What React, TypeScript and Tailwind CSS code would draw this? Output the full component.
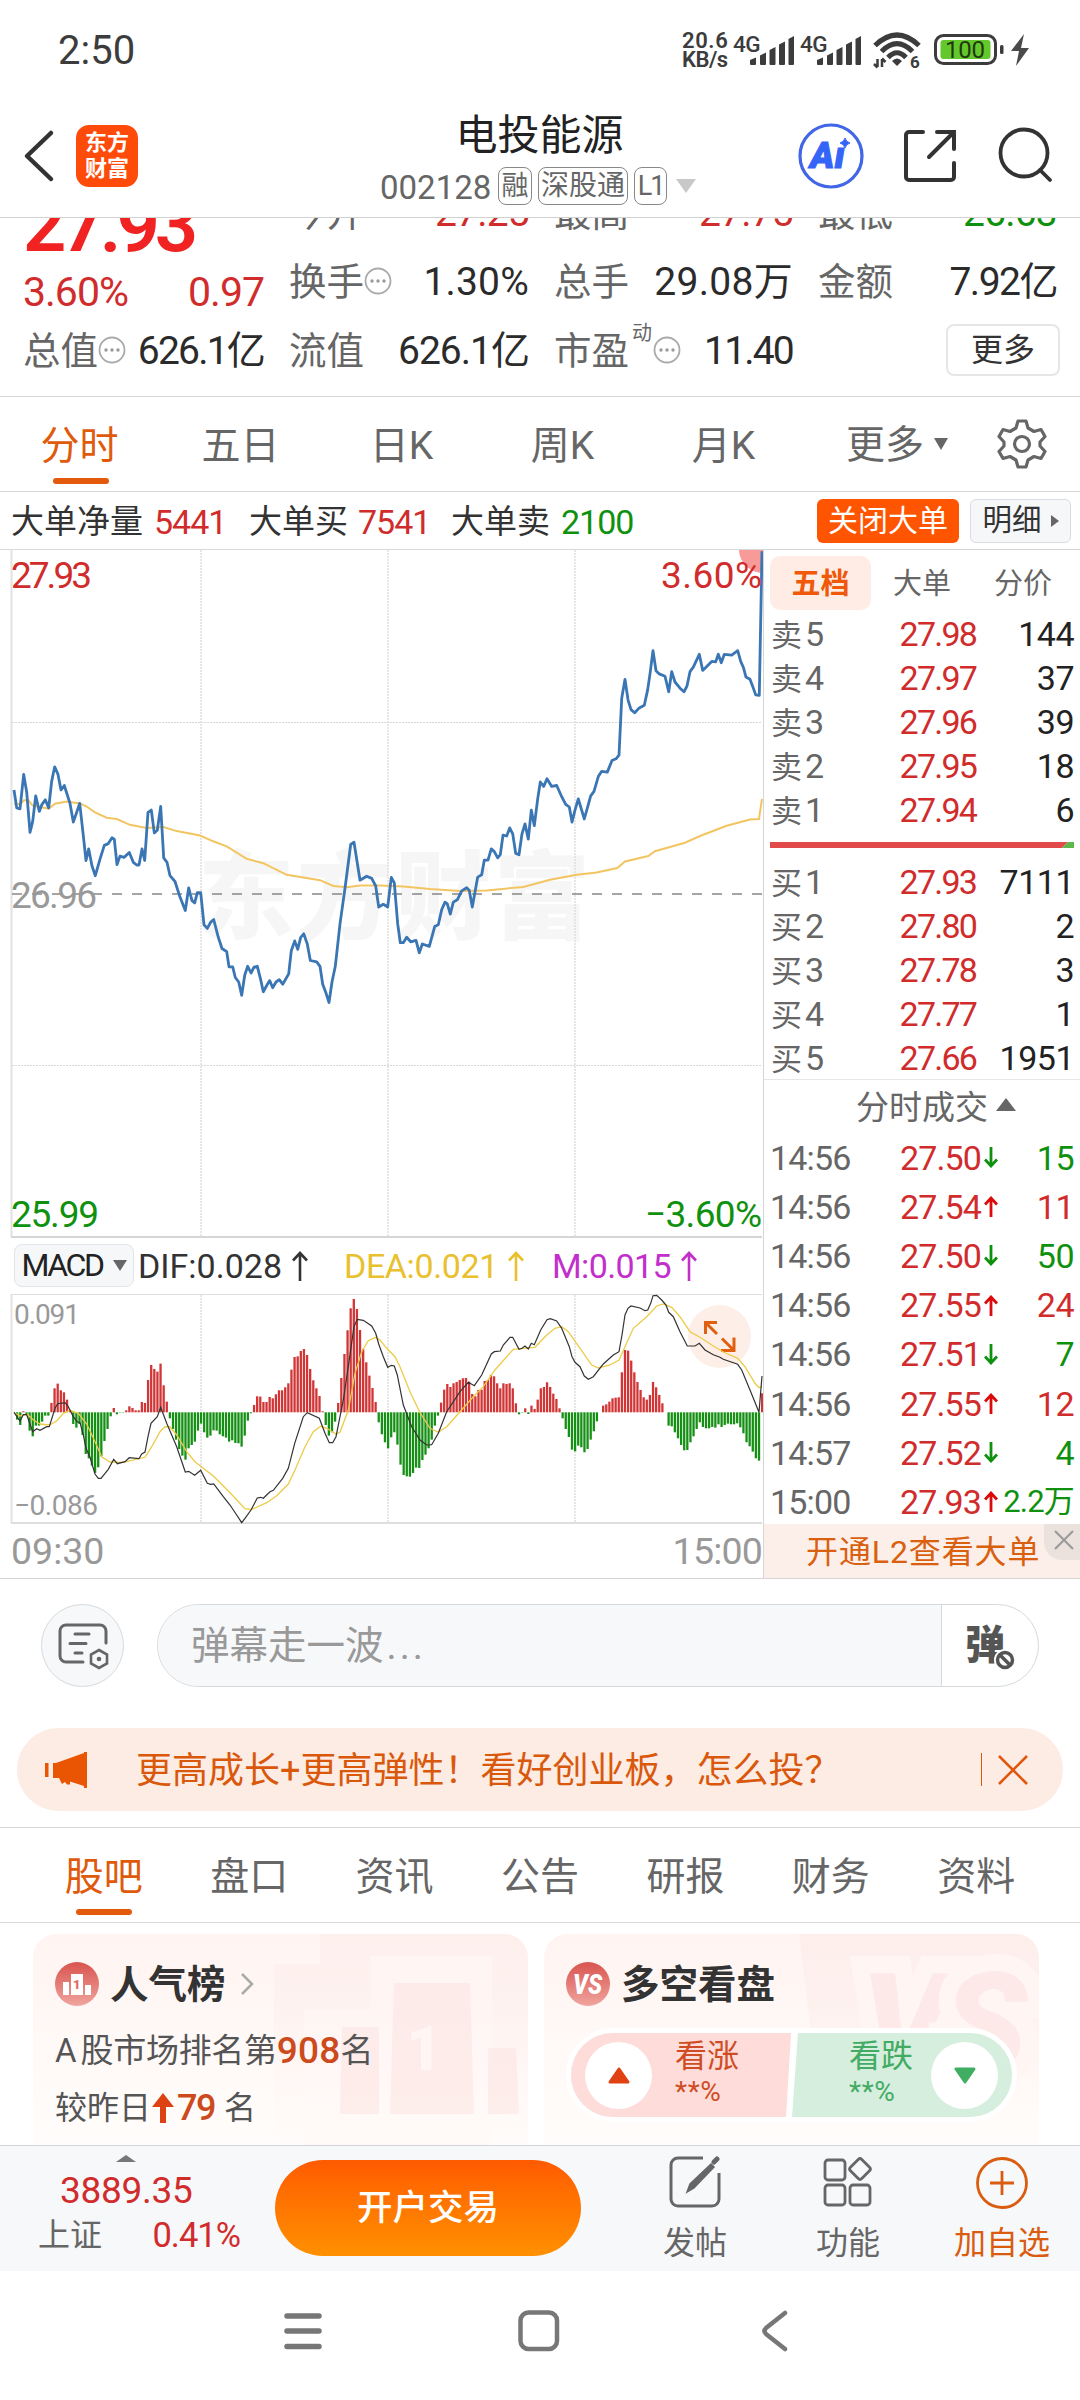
import React from "react";
import clsx from "clsx";

const RED = "text-[#d12c2c]";
const GREEN = "text-[#0f910f]";

// price line: [x / 3, y / 2.24] from the left edge of each session
const morningPrice = [
  42, 560, 50, 600, 60, 602, 71, 525, 80, 565, 90, 655, 98, 630, 107, 573, 118, 608, 126, 592, 136, 582, 146, 600,
  155, 540, 164, 508, 174, 525, 183, 560, 193, 550, 210, 590, 220, 632, 230, 610, 239, 590, 248, 650, 258, 718,
  266, 692, 276, 730, 286, 752, 300, 715, 313, 684, 325, 680, 336, 667, 343, 670, 351, 727, 360, 708, 372, 711,
  388, 700, 400, 722, 410, 728, 417, 728, 426, 692, 434, 718, 444, 610, 454, 605, 463, 656, 472, 650, 482, 597,
  491, 712, 501, 722, 510, 752, 525, 765, 540, 800, 556, 830, 566, 779, 576, 808, 584, 813, 592, 790, 602, 790,
  612, 862, 622, 870, 632, 856, 641, 850, 655, 890, 666, 915, 680, 922, 687, 956, 698, 956, 706, 980, 716, 990,
  725, 1020, 734, 975, 743, 955, 753, 970, 762, 957, 772, 955, 782, 985, 790, 1012, 800, 998, 809, 987, 818, 1003,
  828, 990, 838, 985, 848, 995, 866, 972, 874, 920, 884, 898, 893, 917, 902, 890, 911, 882, 922, 905, 931, 942,
  950, 945, 960, 955, 968, 995, 978, 1015, 987, 1036, 996, 990, 1006, 955, 1020, 860, 1035, 780, 1052, 682,
  1062, 677, 1080, 762, 1100, 753, 1115, 758, 1127, 775, 1136, 822,
];
const afternoonPrice = [
  10, 816, 23, 822, 34, 756, 43, 768, 53, 860, 61, 902, 70, 902, 80, 890, 92, 900, 108, 897, 118, 925, 127, 905,
  148, 910, 164, 866, 175, 862, 185, 828, 195, 811, 202, 815, 211, 838, 220, 811, 232, 806, 245, 786, 260, 779,
  268, 785, 277, 822, 293, 755, 305, 750, 313, 717, 324, 717, 334, 692, 343, 698, 353, 712, 361, 705, 369, 661,
  380, 663, 389, 645, 398, 658, 407, 702, 417, 705, 426, 658, 435, 636, 445, 670, 454, 605, 463, 640, 473, 580,
  481, 542, 491, 552, 501, 535, 515, 552, 530, 550, 545, 575, 557, 592, 568, 598, 576, 632, 585, 605, 595, 580,
  613, 625, 632, 573, 642, 563, 655, 530, 665, 518, 682, 520, 696, 494, 708, 490, 717, 482, 725, 355, 735, 312,
  744, 358, 753, 380, 764, 387, 778, 376, 793, 370, 803, 335, 810, 300, 819, 248, 828, 293, 838, 300, 855, 305,
  866, 340, 875, 295, 885, 318, 900, 332, 912, 340, 921, 327, 930, 295, 940, 285, 958, 256, 968, 292, 978, 285,
  995, 272, 1007, 273, 1015, 256, 1024, 275, 1033, 256, 1055, 258, 1073, 248, 1082, 272, 1090, 285, 1098, 307,
  1110, 312, 1118, 328, 1127, 347, 1138, 348, 1146, 25,
];
const morningAvg = [
  42, 590, 60, 592, 72, 583, 85, 583, 98, 595, 146, 602, 165, 591, 200, 586, 240, 590, 260, 597, 285, 610, 320, 622,
  350, 625, 390, 638, 440, 645, 490, 643, 530, 652, 600, 662, 640, 675, 680, 686, 740, 714, 790, 724, 860, 750,
  960, 762, 1000, 775, 1040, 778, 1080, 774,
];
const afternoonAvg = [
  0, 774, 70, 776, 150, 782, 240, 786, 320, 785, 430, 777, 510, 761, 590, 750, 650, 745, 712, 735, 735, 720,
  805, 708, 825, 697, 915, 678, 960, 663, 1040, 640, 1110, 626, 1137, 625, 1146, 580,
];

const morningDif = [
  42, 577, 60, 603, 70, 584, 80, 584, 98, 635, 110, 626, 120, 631, 140, 620, 148, 620, 165, 565, 173, 551, 195, 548,
  205, 560, 220, 590, 232, 605, 240, 608, 250, 645, 258, 685, 270, 712, 285, 762, 295, 775, 303, 775, 325, 748,
  341, 718, 352, 731, 375, 725, 388, 713, 417, 716, 425, 702, 435, 696, 444, 650, 453, 610, 472, 590, 482, 562,
  500, 610, 530, 680, 556, 756, 566, 754, 584, 766, 602, 751, 622, 790, 632, 793, 641, 792, 670, 830, 690, 855,
  710, 885, 725, 908, 735, 895, 753, 870, 772, 834, 782, 832, 790, 835, 810, 815, 820, 811, 848, 775, 865, 745,
  884, 670, 910, 590, 922, 578, 958, 595, 975, 640, 988, 668, 998, 668, 1008, 650, 1030, 540, 1045, 440, 1062, 320,
  1072, 298, 1090, 301, 1115, 318, 1127, 340, 1136, 372,
];
const afternoonDif = [
  10, 410, 23, 442, 34, 436, 43, 438, 52, 465, 70, 555, 95, 620, 120, 660, 140, 675, 155, 674, 175, 640, 200, 575,
  240, 515, 265, 487, 283, 497, 305, 465, 334, 402, 343, 395, 361, 393, 370, 375, 390, 352, 398, 352, 417, 388,
  426, 385, 435, 378, 445, 387, 454, 370, 463, 374, 482, 330, 501, 299, 511, 296, 530, 303, 545, 325, 568, 380,
  576, 410, 585, 427, 600, 440, 613, 468, 625, 478, 640, 470, 670, 432, 700, 405, 717, 395, 726, 345, 735, 285,
  744, 265, 753, 258, 780, 264, 795, 272, 803, 270, 812, 250, 819, 227, 830, 226, 845, 240, 858, 255, 866, 277,
  880, 290, 900, 335, 922, 378, 945, 378, 958, 370, 975, 390, 1000, 404, 1020, 412, 1030, 418, 1073, 433,
  1085, 450, 1110, 510, 1137, 577, 1146, 468,
];
const morningDea = [
  42, 577, 60, 588, 82, 583, 100, 600, 120, 612, 148, 615, 170, 603, 190, 580, 210, 571, 235, 580, 260, 612,
  285, 665, 305, 710, 330, 726, 370, 727, 435, 712, 455, 680, 480, 635, 495, 620, 510, 621, 530, 645, 560, 695,
  585, 725, 640, 768, 690, 818, 735, 866, 753, 869, 800, 848, 830, 827, 865, 792, 885, 750, 915, 680, 940, 635,
  962, 619, 980, 625, 1008, 642, 1020, 637, 1045, 570, 1065, 460, 1085, 395, 1105, 362, 1127, 352,
];
const afternoonDea = [
  0, 360, 20, 385, 45, 410, 60, 440, 90, 515, 120, 578, 150, 625, 175, 637, 200, 620, 240, 575, 280, 530, 310, 500,
  345, 450, 400, 388, 430, 385, 465, 382, 500, 345, 525, 325, 545, 320, 565, 335, 600, 385, 635, 435, 655, 444,
  690, 435, 717, 420, 735, 380, 760, 325, 800, 290, 830, 258, 850, 252, 875, 262, 900, 290, 930, 335, 960, 352,
  1000, 378, 1030, 396, 1073, 415, 1095, 440, 1125, 490, 1137, 503, 1146, 500,
];

// one histogram value per minute
const macdBars = [
  0, -22, -38, 3, -8, -55, -72, -40, -40, -28, -10, -10, 28, 72, 86, 66, 60, 38, 5, -35, -46, -35, -68, -125, -138,
  -160, -182, -165, -132, -86, -50, -12, 13, -6, -1, -1, 6, 18, 13, 6, 6, 31, 28, 97, 142, 130, 122, 146, 81, 32,
  -18, -50, -82, -110, -130, -142, -108, -98, -88, -55, -34, -60, -76, -70, -54, -55, -66, -72, -76, -88, -84, -92,
  -93, -103, -70, -25, -3, 22, 48, 47, 31, 31, 46, 42, 54, 66, 66, 75, 87, 128, 166, 168, 184, 190, 172, 130, 96, 72,
  49, 3, -38, -70, -60, -28, 28, 103, 175, 246, 312, 340, 310, 247, 190, 150, 110, 73, 31, -30, -66, -90, -108, -75,
  -60, -97, -157, -188, -192, -193, -182, -166, -167, -143, -127, -108, -82, -40, -10, 29, 68, 85, 76, 87, 91, 97,
  102, 103, 92, 55, 48, 67, 68, 94, 97, 112, 108, 87, 72, 87, 85, 87, 72, 27, -6, -1, 12, -5, 20, 10, 38, 72, 76, 90,
  76, 56, 40, 12, -18, -50, -74, -112, -117, -100, -105, -120, -110, -82, -57, -27, 0, 20, 24, 32, 42, 44, 45, 120,
  187, 185, 155, 120, 91, 67, 45, 38, 52, 91, 75, 52, 27, 0, -40, -42, -60, -78, -98, -114, -113, -90, -72, -50, -30,
  -44, -48, -48, -44, -46, -36, -44, -38, -34, -36, -36, -33, -45, -63, -90, -102, -118, -138, -145, 57,
];

const toPoints = (morning: number[], afternoon: number[], yScale: number, y0: number) => {
  const out: string[] = [];
  for (let i = 0; i < morning.length; i += 2) {
    out.push(`${(morning[i] / 3).toFixed(1)},${(morning[i + 1] / yScale + y0).toFixed(1)}`);
  }
  for (let i = 0; i < afternoon.length; i += 2) {
    out.push(`${(afternoon[i] / 3 + 380).toFixed(1)},${(afternoon[i + 1] / yScale + y0).toFixed(1)}`);
  }
  return out.join(" ");
};

const sells = [
  ["卖5", "27.98", "144"],
  ["卖4", "27.97", "37"],
  ["卖3", "27.96", "39"],
  ["卖2", "27.95", "18"],
  ["卖1", "27.94", "6"],
];
const buys = [
  ["买1", "27.93", "7111"],
  ["买2", "27.80", "2"],
  ["买3", "27.78", "3"],
  ["买4", "27.77", "1"],
  ["买5", "27.66", "1951"],
];
const ticks = [
  { time: "14:56", price: "27.50", up: false, vol: "15" },
  { time: "14:56", price: "27.54", up: true, vol: "11" },
  { time: "14:56", price: "27.50", up: false, vol: "50" },
  { time: "14:56", price: "27.55", up: true, vol: "24" },
  { time: "14:56", price: "27.51", up: false, vol: "7" },
  { time: "14:56", price: "27.55", up: true, vol: "12" },
  { time: "14:57", price: "27.52", up: false, vol: "4" },
  { time: "15:00", price: "27.93", up: true, vol: "2.2万", volGreen: true },
];

function Signal() {
  return (
    <div className="flex h-9 w-[61px]">
      <span className="w-[17px] text-[22.500px] leading-[24px] font-medium tracking-[-0.5px]">4G</span>
      <svg width="44" height="36" viewBox="0 0 44 36" className="shrink-0" fill="#3c3c3c">
        <path d="M0 32V28L6 25.500V32a1 1 0 0 1-1 1H1a1 1 0 0 1-1-1z" />
        <path d="M10 23.500L16 20.500V32a1 1 0 0 1-1 1h-4a1 1 0 0 1-1-1z" />
        <path d="M19.500 18L25.500 15V32a1 1 0 0 1-1 1h-4a1 1 0 0 1-1-1z" />
        <path d="M29 12.500L35 9.500V32a1 1 0 0 1-1 1h-4a1 1 0 0 1-1-1z" />
        <path d="M38.500 7L44 4V32a1 1 0 0 1-1 1h-3.500a1 1 0 0 1-1-1z" />
      </svg>
    </div>
  );
}

function StatusBar() {
  return (
    <div className="flex h-[100px] items-center pl-[58px] text-[#3c3c3c]">
      <span className="mt-[2px] w-[624px] text-[40px] leading-none">2:50</span>
      <div className="w-[51px] text-[22px] leading-[19px] font-semibold">
        <div className="tracking-[0.6px]">20.6</div>
        <div className="tracking-[-0.5px]">KB/s</div>
      </div>
      <Signal />
      <div className="ml-[6px]">
        <Signal />
      </div>
      <svg width="48" height="38" viewBox="0 0 48 38" className="ml-[12px]" fill="none" stroke="#3c3c3c">
        <path d="M2 14.500Q24-6.500 46 14.500" strokeWidth="5" />
        <path d="M8.500 20.500Q24 5 39.500 20.500" strokeWidth="5" />
        <path d="M15 26.500Q24 17 33 26.500" strokeWidth="5" />
        <path d="M19 30Q24 25 29 30L24 35z" fill="#3c3c3c" stroke="none" />
        <path d="M4.500 28v8M4.500 36.500L1 33M9 36v-8M9 27.500l3.500 3.500" strokeWidth="2.500" />
        <text x="37" y="36.500" fontSize="17" fontWeight="700" fill="#3c3c3c" stroke="none">
          6
        </text>
      </svg>
      <svg width="96" height="32" viewBox="0 0 96 32" className="ml-[13px]">
        <rect x="1.500" y="1.500" width="60" height="28" rx="8" fill="#fff" stroke="#3c3c3c" strokeWidth="3" />
        <rect x="6.500" y="6" width="50" height="19" rx="3" fill="#63c82c" />
        <text x="11" y="24" fontSize="24" fill="#22390f" textLength="40">
          100
        </text>
        <rect x="66" y="11" width="3.500" height="9" rx="1.500" fill="#3c3c3c" />
        <path d="M90 0L77 17h8l-3 15 13-18h-8z" fill="#4a4a4a" />
      </svg>
    </div>
  );
}

function Header() {
  return (
    <div className="flex h-[118px] border-b border-[#d2d2d2] pl-[23px]">
      <svg width="32" height="56" viewBox="0 0 32 56" className="mt-7" fill="none" stroke="#333" strokeWidth="4.500">
        <path d="M28 5L4 28l24 23" strokeLinecap="round" strokeLinejoin="round" />
      </svg>
      <div className="mt-[25px] ml-[21px] flex h-[62px] w-[62px] flex-col items-center justify-center rounded-[13px] bg-[#ff4b0a] text-[22px] leading-[26px] font-bold text-white">
        <div>东方</div>
        <div>财富</div>
      </div>
      <div className="ml-[203px] flex w-[400px] flex-col items-center text-[#222]">
        <div className="mt-[11px] mr-[3px] text-[42px] leading-[50px]">电投能源</div>
        <div className="mt-[6px] flex h-[38px] w-full items-center pl-[39px] text-[#666]">
          <span className="mt-[2px] w-[118px] text-[33px] leading-none">002128</span>
          <span className="flex h-[38px] w-[34px] items-center justify-center rounded-lg border border-[#888] text-[27px]">
            融
          </span>
          <span className="ml-[6px] flex h-[38px] w-[90px] items-center justify-center rounded-lg border border-[#888] text-[28px]">
            深股通
          </span>
          <span className="ml-[6px] flex h-[38px] w-[33px] items-center justify-center rounded-lg border border-[#888] text-[27px] tracking-[-2px]">
            L1
          </span>
          <svg width="20" height="14" viewBox="0 0 20 14" className="ml-[9px]">
            <path d="M0 0h20L10 14z" fill="#c8c8c8" />
          </svg>
        </div>
      </div>
      <svg width="66" height="66" viewBox="0 0 66 66" className="mt-[23px] ml-[57px]">
        <circle cx="33" cy="33" r="31" fill="none" stroke="#4166e6" strokeWidth="3.200" />
        <text x="12" y="45" fontSize="37" fontWeight="900" fontStyle="italic" fill="#3565f8" stroke="#3565f8">
          Aı
        </text>
        <path d="M47 15q1 4 5 5-4 1-5 5-1-4-5-5 4-1 5-5z" fill="#3565f8" stroke="#3565f8" />
      </svg>
      <svg
        width="54"
        height="54"
        viewBox="0 0 54 54"
        className="mt-[29px] ml-[39px]"
        fill="none"
        stroke="#333"
        strokeWidth="4"
        strokeLinecap="round"
      >
        <path d="M20 3H6a3 3 0 0 0-3 3v42a3 3 0 0 0 3 3h42a3 3 0 0 0 3-3V34" />
        <path d="M34 3h17v17M51 3L26 28" />
      </svg>
      <svg
        width="56"
        height="56"
        viewBox="0 0 56 56"
        className="mt-[27px] ml-[40px]"
        fill="none"
        stroke="#333"
        strokeWidth="3.800"
        strokeLinecap="round"
      >
        <circle cx="27" cy="26" r="23.500" />
        <path d="M43 43l10 10" />
      </svg>
    </div>
  );
}

function Dots() {
  return (
    <svg width="28" height="28" viewBox="0 0 28 28" className="mb-[3px] shrink-0">
      <circle cx="14" cy="14" r="12.500" fill="none" stroke="#aaa" strokeWidth="1.800" />
      <circle cx="8" cy="14" r="1.700" fill="#999" />
      <circle cx="14" cy="14" r="1.700" fill="#999" />
      <circle cx="20" cy="14" r="1.700" fill="#999" />
    </svg>
  );
}

function Cell({ label, value, dots, sup, color = "text-[#2b2b2b]", tracking = "tracking-[-0.8px]" }: any) {
  return (
    <div className="flex h-[69px] items-center leading-none">
      <span className="text-[37.500px] text-[#666]">{label}</span>
      {sup && <span className="mb-[37px] ml-[3px] w-[21px] text-[20px] text-[#666]">{sup}</span>}
      {dots && <Dots />}
      <span className={clsx("ml-auto text-[39px] whitespace-nowrap", color, tracking)}>{value}</span>
    </div>
  );
}

function Quote() {
  return (
    <div className="h-[179px] overflow-hidden border-b border-[#d8d8d8]">
      <div className="-mt-[39px] flex gap-[25px] pl-[23px]">
        <div className="w-[241px]">
          <div className="h-[89px] pt-[11px] text-[76px] leading-[70px] font-semibold tracking-[-5px] text-[#f02222]">
            27.93
          </div>
          <div className={clsx("flex h-[49px] items-center justify-between text-[41px] tracking-[-1px]", RED)}>
            <span>3.60%</span>
            <span>0.97</span>
          </div>
          <Cell label="总值" value="626.1亿" dots tracking="tracking-[-1.8px]" />
        </div>
        <div className="w-[240px]">
          <Cell label="今开" value="27.25" color={RED} />
          <Cell label="换手" value="1.30%" dots tracking="tracking-[0.2px]" />
          <Cell label="流值" value="626.1亿" tracking="tracking-[-1px]" />
        </div>
        <div className="w-[239px]">
          <Cell label="最高" value="27.75" color={RED} />
          <Cell label="总手" value="29.08万" tracking="tracking-[0.3px]" />
          <Cell label="市盈" value="11.40" dots sup="动" tracking="tracking-[-1.8px]" />
        </div>
        <div className="w-[239px]">
          <Cell label="最低" value="26.63" color={GREEN} />
          <Cell label="金额" value="7.92亿" tracking="tracking-[-1.5px]" />
          <div className="flex h-[69px] items-center justify-end">
            <button className="mr-[-3px] mb-[3px] h-[52px] w-[114px] rounded-lg border-2 border-[#e6e6e6] text-[32px] leading-none text-[#333]">
              更多
            </button>
          </div>
        </div>
      </div>
    </div>
  );
}

function PeriodTabs() {
  return (
    <div className="flex h-[95px] items-center border-b border-[#d8d8d8] text-[39px] leading-none text-[#666]">
      {["分时", "五日", "日K", "周K", "月K"].map((t, i) => (
        <div key={t} className="flex h-full w-[161px] flex-col items-center">
          <span className={clsx("mt-[29px] mr-[2px] leading-[40px]", i === 0 && "text-[#e05a0c]")}>{t}</span>
          {i === 0 && <span className="mt-[12px] h-[6px] w-[56px] rounded-full bg-[#e35a0c]" />}
        </div>
      ))}
      <span className="mt-[3px] ml-[41px]">更多</span>
      <svg width="14" height="12" viewBox="0 0 14 12" className="ml-[10px]">
        <path d="M0 0h14L7 12z" fill="#666" />
      </svg>
      <svg
        width="50"
        height="50"
        viewBox="0 0 50 50"
        className="ml-[49px]"
        fill="none"
        stroke="#666"
        strokeWidth="3.200"
        strokeLinejoin="round"
      >
        <path d="M21 2h8l2 7 6 3.500 7-2 4 7-5 5.500v4l5 5.500-4 7-7-2-6 3.500-2 7h-8l-2-7-6-3.500-7 2-4-7 5-5.500v-4l-5-5.500 4-7 7 2L19 9z" />
        <circle cx="25" cy="25" r="7.500" />
      </svg>
    </div>
  );
}

function BigOrders() {
  return (
    <div className="flex h-[57px] items-center pt-[2px] pl-[11px] text-[33px] leading-none text-[#333]">
      <span className="w-[143px]">大单净量</span>
      <span className={clsx("w-[95px] text-[34px] tracking-[-1px]", RED)}>5441</span>
      <span className="w-[109px]">大单买</span>
      <span className={clsx("w-[93px] text-[34px] tracking-[-1px]", RED)}>7541</span>
      <span className="w-[110px]">大单卖</span>
      <span className={clsx("text-[34px] tracking-[-1px]", GREEN)}>2100</span>
      <button className="mb-[2px] ml-auto h-[44px] w-[142px] rounded-md bg-[#ff5500] text-[30px] leading-none text-white">
        关闭大单
      </button>
      <button className="mr-[9px] mb-[2px] ml-[11px] flex h-[44px] w-[101px] items-center justify-center gap-[9px] rounded-md border border-[#d9dce2] bg-[#f6f7f9] text-[29.500px] leading-none">
        明细
        <svg width="8" height="12" viewBox="0 0 8 12">
          <path d="M0 0l8 6-8 6z" fill="#666" />
        </svg>
      </button>
    </div>
  );
}

function PriceChart() {
  return (
    <svg width="763" height="689" viewBox="0 549 763 689" className="block">
      <text x="198" y="931" fontSize="96" fontWeight="900" fill="#f6f6f6" textLength="392">
        东方财富
      </text>
      <path d="M0 549.500H763" stroke="#d8d8d8" />
      <path d="M11.500 549V1237" stroke="#e2e2e2" strokeWidth="2" />
      <path d="M11 1237H762" stroke="#d6d6d6" strokeWidth="2" />
      <path d="M201 550V1236M388 550V1236M575 550V1236" stroke="#dedede" strokeWidth="1.500" strokeDasharray="2 1" />
      <path d="M12 722.500H762M12 1065.500H762" stroke="#d8d8d8" strokeDasharray="2 1" />
      <path d="M12 894H762" stroke="#888" strokeWidth="1.600" strokeDasharray="10 10" />
      <path d="M739 550a24 24 0 0 0 24 23V550z" fill="#f89a98" />
      <polyline points={toPoints(morningAvg, afternoonAvg, 2.24, 540)} fill="none" stroke="#f3c562" strokeWidth="2" />
      <polyline
        points={toPoints(morningPrice, afternoonPrice, 2.24, 540)}
        fill="none"
        stroke="#3a75b4"
        strokeWidth="2.800"
        strokeLinejoin="round"
      />
      <g fontSize="37">
        <text x="11" y="588" fill="#d12c2c" textLength="81">
          27.93
        </text>
        <text x="661" y="588" fill="#d12c2c" textLength="101">
          3.60%
        </text>
        <text x="11" y="908" fill="#999" textLength="86">
          26.96
        </text>
        <text x="11" y="1227" fill="#0f910f" textLength="88">
          25.99
        </text>
        <text x="645" y="1227" fill="#0f910f" textLength="117">
          −3.60%
        </text>
      </g>
    </svg>
  );
}

function IndicatorValue({ text, className }: any) {
  return (
    <div className={clsx("flex items-center", className)}>
      <span>{text}</span>
      <svg width="16" height="30" viewBox="0 0 16 30" className="ml-[10px]" fill="none" stroke="currentColor">
        <path d="M8 30V2M1 9.500L8 2l7 7.500" strokeWidth="2.600" />
      </svg>
    </div>
  );
}

function MacdPanel() {
  return (
    <>
      <div className="flex h-[56px] items-center pl-[14px] text-[34px] leading-none">
        <button className="mb-[2px] flex h-[43px] w-[120px] shrink-0 items-center justify-center gap-[10px] rounded-lg border border-[#e2e4e9] bg-[#f6f7f9] text-[32px] leading-none tracking-[-2.4px] text-[#222]">
          MACD
          <svg width="14" height="11" viewBox="0 0 14 11">
            <path d="M0 0h14L7 11z" fill="#666" />
          </svg>
        </button>
        <IndicatorValue text="DIF:0.028" className="ml-[4px] w-[206px] text-[#333]" />
        <IndicatorValue text="DEA:0.021" className="w-[208px] tracking-[-0.4px] text-[#e9c02e]" />
        <IndicatorValue text="M:0.015" className="tracking-[-0.6px] text-[#c22fca]" />
      </div>
      <svg width="763" height="231" viewBox="0 1294 763 231" className="block">
        <path d="M11 1294.500H762" stroke="#dedede" />
        <path d="M11.500 1294V1523" stroke="#e2e2e2" strokeWidth="2" />
        <path d="M11 1523H762" stroke="#dedede" strokeWidth="2" />
        <path d="M201 1295V1522M388 1295V1522M575 1295V1522" stroke="#dedede" strokeWidth="1.500" strokeDasharray="2 1" />
        <circle cx="719.500" cy="1336.500" r="31.500" fill="#feeee8" />
        <g fill="none" stroke="#e0600f" strokeWidth="3">
          <path d="M717 1322.500h-11.500v11.500M706 1323l11 11" />
          <path d="M721 1350.500h13v-13M733 1349.500l-11-11" />
        </g>
        {macdBars.map((v, i) => (
          <rect
            key={i}
            x={12.900 + i * 3.117}
            y={v > 0 ? 1412.300 - v / 3 : 1412.300}
            width="2.300"
            height={Math.abs(v) / 3}
            fill={v > 0 ? "#d13535" : "#159015"}
          />
        ))}
        <polyline points={toPoints(morningDea, afternoonDea, 3, 1220)} fill="none" stroke="#edcb45" strokeWidth="1.300" />
        <polyline points={toPoints(morningDif, afternoonDif, 3, 1220)} fill="none" stroke="#333" strokeWidth="1.200" />
        <g fontSize="28" fill="#999">
          <text x="14" y="1324" textLength="66">
            0.091
          </text>
          <text x="14" y="1515" textLength="84">
            −0.086
          </text>
        </g>
      </svg>
      <div className="flex h-[53px] items-center justify-between pr-px pl-[11px] text-[37.500px] leading-none text-[#999]">
        <span>09:30</span>
        <span className="tracking-[-0.8px]">15:00</span>
      </div>
    </>
  );
}

function LevelRow({ row }: any) {
  return (
    <div className="flex h-[44px] items-center text-[34px] leading-none">
      <span className="w-[86px] text-[#666]">
        <span className="mr-[3px] text-[31px]">{row[0][0]}</span>
        {row[0][1]}
      </span>
      <span className={clsx("w-[119px] text-right tracking-[-1.8px]", RED)}>{row[1]}</span>
      <span className="ml-auto tracking-[-0.5px] text-[#222]">{row[2]}</span>
    </div>
  );
}

function OrderBook() {
  return (
    <div className="flex w-[317px] flex-col border-t border-l border-[#d5d5d5]">
      <div className="mt-[6px] ml-[6px] flex h-[55px] items-center text-[29px] leading-none text-[#666]">
        <span className="flex h-full w-[101px] items-center justify-center rounded-[10px] bg-[#ffede5] pt-[3px] font-bold text-[#f0580a]">
          五档
        </span>
        <span className="mt-[3px] ml-[22px]">大单</span>
        <span className="mt-[3px] ml-[43px]">分价</span>
      </div>
      <div className="h-[468px] pt-[2px] pr-[6px] pl-[7px]">
        {sells.map((r) => (
          <LevelRow key={r[0]} row={r} />
        ))}
        <div className="flex h-[28px] items-center pb-[2px]">
          <svg width="304" height="6" viewBox="0 0 304 6" className="-ml-px">
            <path d="M0 0h298l-6 6H0z" fill="#e24a4a" />
            <path d="M298 0h6v6h-12z" fill="#5cb84c" />
          </svg>
        </div>
        {buys.map((r) => (
          <LevelRow key={r[0]} row={r} />
        ))}
      </div>
      <div className="mt-px flex h-[53px] items-center border-t border-[#e6e6e6] pt-[2px] pl-[92px] text-[33px] leading-none text-[#666]">
        分时成交
        <svg width="20" height="13" viewBox="0 0 20 13" className="mb-[6px] ml-[8px]">
          <path d="M0 13h20L10 0z" fill="#666" />
        </svg>
      </div>
      <div className="h-[392px] pt-px pr-[6px] pl-[6px] text-[34px] leading-none">
        {ticks.map((t, i) => (
          <div key={i} className="flex h-[49.200px] items-center">
            <span className="w-[90px] tracking-[-0.8px] text-[#666]">{t.time}</span>
            <span className={clsx("w-[121px] text-right tracking-[-0.9px]", RED)}>{t.price}</span>
            <svg
              width="14"
              height="21"
              viewBox="0 0 14 21"
              className={clsx("ml-[3px] shrink-0", !t.up && "rotate-180")}
              fill="none"
              stroke={t.up ? "#dc0a0a" : "#0f910f"}
              strokeWidth="2.800"
            >
              <path d="M7 21V2M1 8.500L7 2l6 6.500" />
            </svg>
            <span
              className={clsx(
                "ml-auto whitespace-nowrap",
                t.up && !t.volGreen ? RED : GREEN,
                t.volGreen ? "text-[31px] tracking-[-0.8px]" : "tracking-[-0.5px]"
              )}
            >
              {t.vol}
            </span>
          </div>
        ))}
      </div>
      <div className="relative mt-auto h-[54px] bg-[#fcefe9] pl-[42px] text-[32px] leading-[56px] tracking-[0.9px] text-[#d9600f]">
        开通L2查看大单
        <div className="absolute top-0 right-0 flex h-[36px] w-[36px] items-center justify-center rounded-bl-[18px] bg-[#ebe1dd] pl-[4px] pb-[4px]">
          <svg width="20" height="20" viewBox="0 0 20 20" stroke="#999" strokeWidth="2">
            <path d="M1 1l18 18M19 1L1 19" />
          </svg>
        </div>
      </div>
    </div>
  );
}

function CommentBar() {
  return (
    <div className="flex h-[134px] items-start pt-[25px] pl-[41px]">
      <div className="flex h-[83px] w-[83px] items-center justify-center rounded-full border border-[#d6dadd] bg-[#f7f8fa]">
        <svg width="52" height="48" viewBox="0 0 52 48" fill="none" stroke="#666" strokeWidth="3" strokeLinecap="round">
          <path d="M26 40H9a6 6 0 0 1-6-6V9a6 6 0 0 1 6-6h34a6 6 0 0 1 6 6v12" />
          <path d="M18 12h14M13 21.500h16M18 31h7" />
          <path d="M42 28l8 4.500v9L42 46l-8-4.500v-9z" strokeWidth="2.600" />
          <circle cx="42" cy="37" r="2.300" fill="#666" stroke="none" />
        </svg>
      </div>
      <div className="ml-[33px] flex h-[83px] w-[882px] overflow-hidden rounded-full border border-[#d3d9dc] bg-white">
        <div className="flex w-[784px] items-center border-r border-[#d3d9dc] bg-[#f7f8fa] pt-[2px] pl-[33px] text-[38.500px] leading-none text-[#999]">
          弹幕走一波<span className="ml-[3px] tracking-[3px]">...</span>
        </div>
        <svg width="54" height="52" viewBox="0 0 54 52" className="mt-[15px] ml-[23px]">
          <text x="0" y="39" fontSize="40" fontWeight="900" fill="#555">
            弹
          </text>
          <circle cx="40" cy="40" r="11" fill="#fff" />
          <circle cx="40" cy="40" r="7.500" fill="none" stroke="#555" strokeWidth="3.500" />
          <path d="M35 35l10 10" stroke="#555" strokeWidth="3.500" />
        </svg>
      </div>
    </div>
  );
}

function Notice() {
  return (
    <div className="mx-[17px] mt-[15px] mb-4 flex h-[83px] items-center rounded-full bg-[#fcece4] pl-[28px] text-[#d9580c]">
      <svg width="42" height="38" viewBox="0 0 42 38" fill="#ea5504">
        <path d="M0 12h3.500v14H0zM8 12h3L39 2V1h3v36h-3v-2l-14-4.500v3h-3L20 31l-3 2-3-6H8z" />
      </svg>
      <span className="mt-[3px] ml-[49px] text-[36px] leading-none whitespace-nowrap">更高成长+更高弹性！看好创业板，怎么投？</span>
      <span className="ml-auto h-[33px] w-px bg-[#d9580c]" />
      <svg width="30" height="30" viewBox="0 0 30 30" className="mr-[35px] ml-[16px]" stroke="#e0560c" strokeWidth="2.600">
        <path d="M1 1l28 28M29 1L1 29" />
      </svg>
    </div>
  );
}

function ContentTabs() {
  return (
    <div className="grid h-[96px] grid-cols-7 border-y border-[#d8d8d8] px-[31px] text-[39px] text-[#666]">
      {["股吧", "盘口", "资讯", "公告", "研报", "财务", "资料"].map((t, i) => (
        <div key={t} className="flex flex-col items-center">
          <span className={clsx("mt-[29px] leading-[40px]", i === 0 && "text-[#e05a0c]")}>{t}</span>
          {i === 0 && <span className="mt-[12px] h-[6px] w-[56px] rounded-full bg-[#e35a0c]" />}
        </div>
      ))}
    </div>
  );
}

function RankCard() {
  return (
    <div className="relative h-[260px] w-[495px] overflow-hidden rounded-[24px] bg-gradient-to-b from-[#fff4f1] via-[#fffaf8] to-[#fffefd] pl-[22px] text-[#555]">
      <svg width="254" height="212" viewBox="0 0 254 212" className="absolute top-0 right-0">
        <defs>
          <linearGradient id="rank" x1="0" y1="0" x2="0" y2="1">
            <stop offset="0" stopColor="#d9544f" />
            <stop offset="1" stopColor="#f0a49e" />
          </linearGradient>
          <linearGradient id="fade" x1="0" y1="0" x2="0" y2="1">
            <stop offset="0" stopColor="#fdeeeb" />
            <stop offset="1" stopColor="#fdeeeb" stopOpacity="0" />
          </linearGradient>
        </defs>
        <path d="M46 0H254V212H0V30H46z" fill="url(#fade)" opacity="0.800" />
        <path d="M96 22H218V212H30V75H96z" fill="#fff8f6" opacity="0.600" />
        <path d="M68 93h37v87H66zM120 49h76l4 131h-84zM214 114h28l3 66h-31z" fill="#fce5e3" opacity="0.600" />
        <text x="132" y="136" fontSize="62" fontWeight="900" fill="#fff6f4">
          1
        </text>
      </svg>
      <div className="relative mt-[28px] flex h-[44px] items-center">
        <svg width="44" height="44" viewBox="0 0 44 44">
          <circle cx="22" cy="22" r="22" fill="url(#rank)" />
          <path d="M8 20h6v13H8zM16 12h12v21H16zM30 23h6v10h-6z" fill="#fff" />
          <text x="18" y="27" fontSize="13" fontWeight="900" fill="#dd6b66">
            1
          </text>
        </svg>
        <span className="mt-[2px] ml-[11px] text-[38.500px] leading-none font-bold text-[#333]">人气榜</span>
        <svg width="14" height="22" viewBox="0 0 14 22" className="ml-[14px]" fill="none" stroke="#aaa" strokeWidth="2.500">
          <path d="M2 1l10 10L2 21" />
        </svg>
      </div>
      <div className="relative mt-[22px] flex h-[44px] items-center text-[33px] leading-none">
        A<span className="ml-[4px] tracking-[-0.3px]">股市场排名第</span>
        <span className="text-[37px] font-medium tracking-[0.2px] text-[#cc4a1c]">908</span>名
      </div>
      <div className="relative mt-[14px] flex h-[44px] items-center text-[32px] leading-none">
        较昨日
        <svg width="24" height="32" viewBox="0 0 24 32" fill="#dd4214">
          <path d="M12 1l11 14h-8v16H9V15H1z" />
        </svg>
        <span className="mr-[9px] ml-[2px] text-[36px] font-medium tracking-[-1.5px] text-[#cc4a1c]">79</span>名
      </div>
    </div>
  );
}

function VoteCard() {
  return (
    <div className="relative h-[260px] w-[495px] overflow-hidden rounded-[24px] bg-gradient-to-b from-[#fff4f1] via-[#fffaf8] to-[#fffefd] pl-[22px]">
      <svg width="244" height="180" viewBox="0 0 244 180" className="absolute top-0 right-0">
        <path d="M4 0H244V180H26z" fill="url(#fade)" />
        <text
          x="66"
          y="138"
          fontSize="138"
          fontWeight="900"
          fontStyle="italic"
          fill="#fdeae8"
          stroke="#fff5f3"
          strokeWidth="34"
          paintOrder="stroke"
          textLength="166"
        >
          VS
        </text>
      </svg>
      <div className="relative mt-[28px] flex h-[44px] items-center">
        <svg width="44" height="44" viewBox="0 0 44 44">
          <circle cx="22" cy="22" r="22" fill="url(#rank)" />
          <text x="7" y="32" fontSize="27" fontWeight="900" fontStyle="italic" fill="#fff" textLength="29" lengthAdjust="spacingAndGlyphs">
            VS
          </text>
        </svg>
        <span className="mt-[2px] ml-[11px] text-[38.500px] leading-none font-bold text-[#333]">多空看盘</span>
      </div>
      <div className="relative mt-[22px] flex h-[94px] w-[451px] overflow-hidden rounded-full border-[5px] border-white bg-[#d6eedd]">
        <svg width="230" height="84" viewBox="0 0 230 84" className="absolute top-0 left-0">
          <path d="M0 0H227L221 84H0z" fill="#fff" />
          <path d="M0 0H220L215 84H0z" fill="#fddcd9" />
        </svg>
        <div className="relative flex w-full items-center justify-between px-[14px]">
          <div className="flex h-[67px] w-[67px] items-center justify-center rounded-full bg-white">
            <svg width="22" height="17" viewBox="0 0 22 17">
              <path d="M11 2l9 13H2z" fill="#e04214" stroke="#e04214" strokeWidth="3" strokeLinejoin="round" />
            </svg>
          </div>
          <div className="-mt-[5px] ml-[23px] leading-none text-[#cf4c25]">
            <div className="text-[32px]">看涨</div>
            <div className="mt-[6px] text-[28px] tracking-[0.6px]">**%</div>
          </div>
          <div className="-mt-[5px] mr-[18px] ml-auto leading-none text-[#43ab64]">
            <div className="text-[32px]">看跌</div>
            <div className="mt-[6px] text-[28px] tracking-[0.6px]">**%</div>
          </div>
          <div className="flex h-[67px] w-[67px] items-center justify-center rounded-full bg-white">
            <svg width="22" height="17" viewBox="0 0 22 17">
              <path d="M11 15L2 2h18z" fill="#3fae62" stroke="#3fae62" strokeWidth="3" strokeLinejoin="round" />
            </svg>
          </div>
        </div>
      </div>
    </div>
  );
}

function BottomBar() {
  return (
    <div className="flex h-[126px] border-t border-[#d2d4d7] bg-[#f7f8fa] text-[32px] leading-none text-[#666]">
      <div className="flex w-[275px] flex-col pl-[38px]">
        <svg width="20" height="7" viewBox="0 0 20 7" className="mt-[9px] ml-[78px]">
          <path d="M0 7h20L10 0z" fill="#777" />
        </svg>
        <div className={clsx("mt-[10px] ml-[22px] text-[37px] leading-[38px] tracking-[-0.3px]", RED)}>3889.35</div>
        <div className="mt-[6px] flex h-[38px] w-[202px] items-center justify-between">
          <span>上证</span>
          <span className={clsx("text-[34.500px] tracking-[-1px]", RED)}>0.41%</span>
        </div>
      </div>
      <button className="mt-[14px] h-[96px] w-[306px] rounded-full bg-gradient-to-b from-[#ff5a00] to-[#ff9000] pt-[2px] text-[35.500px] leading-none font-medium text-white">
        开户交易
      </button>
      <div className="ml-[47px] flex w-[134px] flex-col items-center">
        <svg width="52" height="52" viewBox="0 0 52 52" className="mt-[10px]" fill="none" stroke="#666" strokeWidth="3">
          <path d="M34 2H9a7 7 0 0 0-7 7v34a7 7 0 0 0 7 7h34a7 7 0 0 0 7-7V17" />
          <path d="M42 8l3 3-20 21-7 4 3-8z" fill="#666" strokeWidth="1.500" />
          <path d="M45 6l3-3" strokeWidth="5" strokeLinecap="round" />
        </svg>
        <span className="mt-[19px]">发帖</span>
      </div>
      <div className="ml-[19px] flex w-[134px] flex-col items-center">
        <svg width="50" height="50" viewBox="0 0 50 50" className="mt-[11px]" fill="none" stroke="#666" strokeWidth="2.800">
          <rect x="2" y="3" width="20" height="20" rx="3" />
          <rect x="2" y="28" width="20" height="20" rx="3" />
          <rect x="27" y="28" width="20" height="20" rx="3" />
          <rect x="29" y="4" width="16" height="16" rx="2.500" transform="rotate(45 37 12)" />
        </svg>
        <span className="mt-[20px]">功能</span>
      </div>
      <div className="ml-[20px] flex w-[134px] flex-col items-center text-[#d95c10]">
        <svg width="52" height="52" viewBox="0 0 52 52" className="mt-[11px]" fill="none" stroke="#d95c10" strokeWidth="2.800">
          <circle cx="26" cy="26" r="24.500" />
          <path d="M26 14v24M14 26h24" />
        </svg>
        <span className="mt-[18px]">加自选</span>
      </div>
    </div>
  );
}

function SystemNav() {
  return (
    <div className="flex h-[129px] items-center pb-[9px] pl-[283px]">
      <svg width="40" height="40" viewBox="0 0 40 40" stroke="#777" strokeWidth="5.500" strokeLinecap="round">
        <path d="M4 5h32M4 20h32M4 35.500h32" />
      </svg>
      <svg width="42" height="42" viewBox="0 0 42 42" className="ml-[195px]" fill="none" stroke="#777" strokeWidth="4.500">
        <rect x="2.500" y="2.500" width="36.500" height="36.500" rx="8" />
      </svg>
      <svg width="28" height="42" viewBox="0 0 28 42" className="ml-[200px]" fill="none" stroke="#777" strokeWidth="4.500">
        <path d="M25 3L6 18q-3 3 0 6l19 15" strokeLinecap="round" strokeLinejoin="round" />
      </svg>
    </div>
  );
}

export default function App() {
  return (
    <div className="flex h-[2400px] w-[1080px] flex-col overflow-hidden bg-white font-['Roboto','Noto_Sans_CJK_SC',sans-serif]">
      <StatusBar />
      <Header />
      <Quote />
      <PeriodTabs />
      <BigOrders />
      <div className="flex h-[1030px] border-b border-[#d5d5d5]">
        <div className="w-[763px]">
          <PriceChart />
          <MacdPanel />
        </div>
        <OrderBook />
      </div>
      <CommentBar />
      <Notice />
      <ContentTabs />
      <div className="flex h-[222px] shrink-0 gap-4 overflow-hidden pt-[11px] pl-[33px]">
        <RankCard />
        <VoteCard />
      </div>
      <BottomBar />
      <SystemNav />
    </div>
  );
}
